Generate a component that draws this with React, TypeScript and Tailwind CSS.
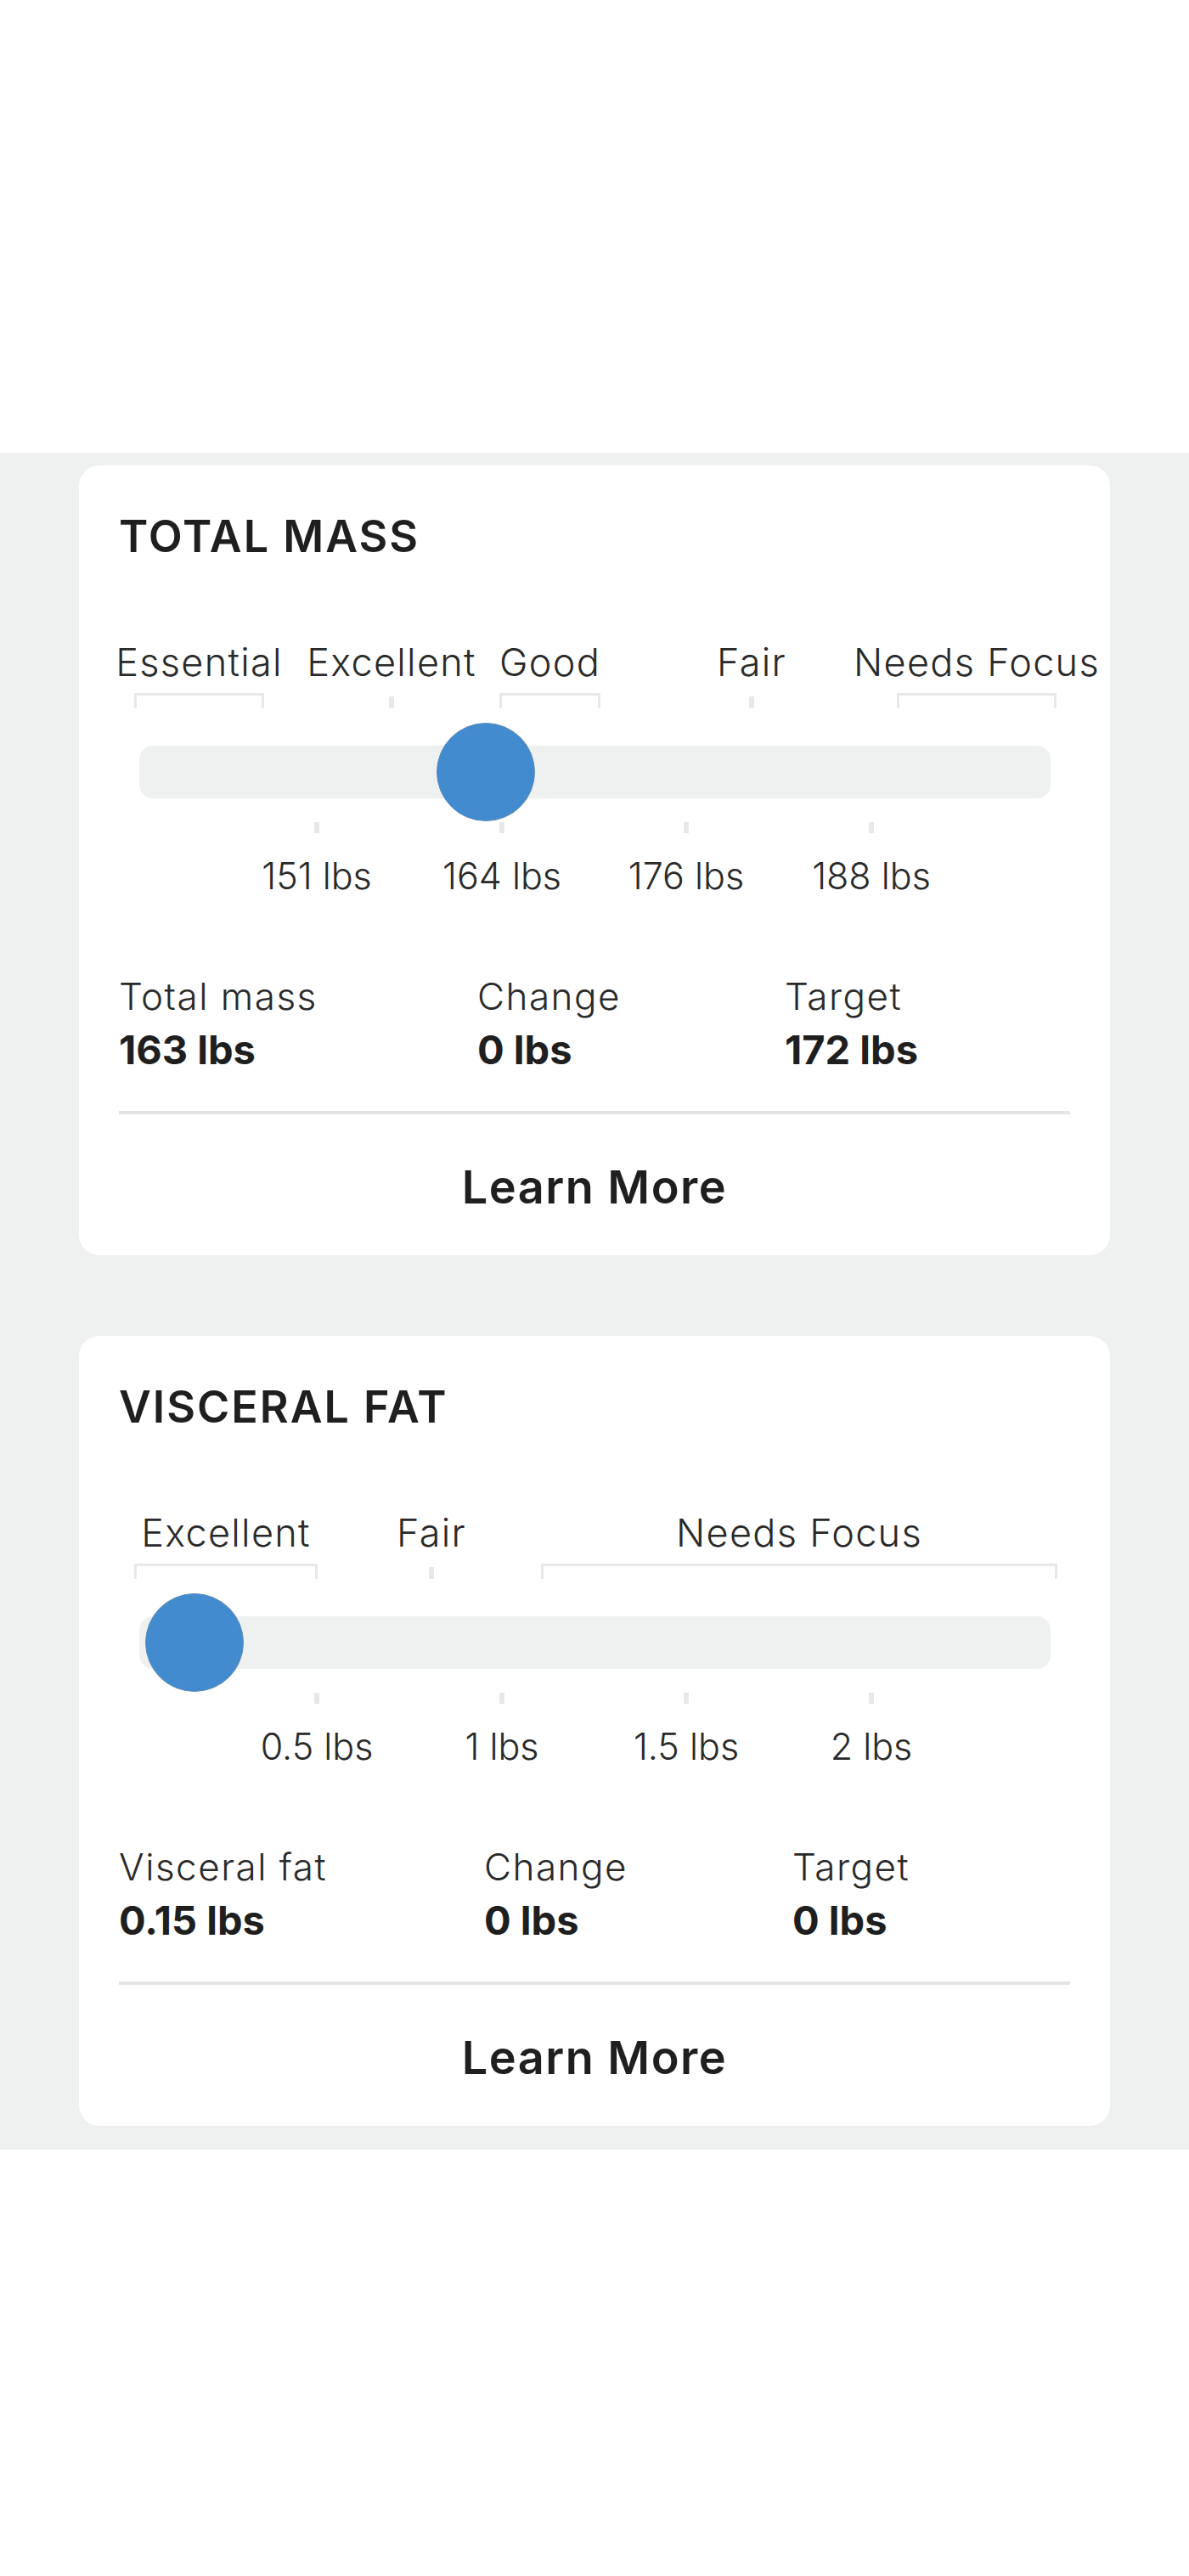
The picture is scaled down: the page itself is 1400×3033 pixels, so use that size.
import React from "react"

type Zone = { label: string; from: number; to?: number }
type Tick = { at: number; label: string }
type Stat = { label: string; value: string }

type Metric = {
  title: string
  zones: Zone[]
  ticks: Tick[]
  thumb: number
  stats: Stat[]
  cols: string
}

const metrics: Metric[] = [
  {
    title: "TOTAL MASS",
    zones: [
      { label: "Essential", from: 18, to: 171 },
      { label: "Excellent", from: 318 },
      { label: "Good", from: 448, to: 567 },
      { label: "Fair", from: 742 },
      { label: "Needs Focus", from: 916, to: 1104 },
    ],
    ticks: [
      { at: 230, label: "151 lbs" },
      { at: 448, label: "164 lbs" },
      { at: 665, label: "176 lbs" },
      { at: 883, label: "188 lbs" },
    ],
    thumb: 432,
    stats: [
      { label: "Total mass", value: "163 lbs" },
      { label: "Change", value: "0 lbs" },
      { label: "Target", value: "172 lbs" },
    ],
    cols: "grid-cols-[422px_362px_1fr]",
  },
  {
    title: "VISCERAL FAT",
    zones: [
      { label: "Excellent", from: 18, to: 234 },
      { label: "Fair", from: 365 },
      { label: "Needs Focus", from: 497, to: 1105 },
    ],
    ticks: [
      { at: 230, label: "0.5 lbs" },
      { at: 448, label: "1 lbs" },
      { at: 665, label: "1.5 lbs" },
      { at: 883, label: "2 lbs" },
    ],
    thumb: 89,
    stats: [
      { label: "Visceral fat", value: "0.15 lbs" },
      { label: "Change", value: "0 lbs" },
      { label: "Target", value: "0 lbs" },
    ],
    cols: "grid-cols-[430px_363px_1fr]",
  },
]

function centerOf(z: Zone) {
  return z.to !== undefined ? (z.from + z.to) / 2 : z.from + 3
}

// zone labels, brackets, track with thumb, value ticks
function Scale({ m }: { m: Metric }) {
  return (
    <div className="mt-[99px] flex flex-col">
      <div className="relative h-[45px]">
        {m.zones.map((z) => (
          <span
            key={z.label}
            className="absolute top-0 -translate-x-1/2 whitespace-nowrap text-[45px] leading-none font-light tracking-[1.3px] text-[#2a2a2a]"
            style={{ left: centerOf(z) }}
          >
            {z.label}
          </span>
        ))}
      </div>

      <div className="relative mt-[14px] h-[18px]">
        {m.zones.map((z) =>
          z.to !== undefined ? (
            <div
              key={z.label}
              className="absolute top-0 h-[18px] border-x-[3px] border-t-[3px] border-[#e7e9e8]"
              style={{ left: z.from, width: z.to - z.from }}
            />
          ) : (
            <div
              key={z.label}
              className="absolute bottom-0 h-[14px] w-[6px] bg-[#e7e9e8]"
              style={{ left: z.from }}
            />
          )
        )}
      </div>

      <div className="relative mt-[44px] ml-[24px] h-[62px] w-[1073px] rounded-[16px] bg-[#eff1f0]">
        <div
          className="absolute top-1/2 h-[116px] w-[116px] -translate-x-1/2 -translate-y-1/2 rounded-full border border-[#5f8db8] bg-[#428bcf]"
          style={{ left: m.thumb - 24 }}
        />
      </div>

      <div className="relative mt-[28px] h-[13px]">
        {m.ticks.map((t) => (
          <div
            key={t.label}
            className="absolute top-0 h-[13px] w-[6px] bg-[#e7e9e8]"
            style={{ left: t.at }}
          />
        ))}
      </div>

      <div className="relative mt-[29px] h-[43px]">
        {m.ticks.map((t) => (
          <span
            key={t.label}
            className="absolute top-0 -translate-x-1/2 whitespace-nowrap text-[43px] leading-none font-light text-[#2a2a2a]"
            style={{ left: t.at + 3 }}
          >
            {t.label}
          </span>
        ))}
      </div>
    </div>
  )
}

function MetricCard({ m }: { m: Metric }) {
  return (
    <div className="mx-[93px] flex flex-col rounded-[24px] bg-white px-[47px] pt-[58px] pb-[53px]">
      <h2 className="text-[52px] leading-none font-semibold tracking-[2px] text-[#1f1f1f]">
        {m.title}
      </h2>

      <Scale m={m} />

      <div className={`mt-[98px] grid ${m.cols}`}>
        {m.stats.map((s) => (
          <div key={s.label} className="flex flex-col gap-[17px]">
            <div className="text-[44px] leading-none font-light tracking-[1.5px] text-[#2a2a2a]">
              {s.label}
            </div>
            <div className="text-[47px] leading-none font-bold text-[#1f1f1f]">
              {s.value}
            </div>
          </div>
        ))}
      </div>

      <div className="mt-[49px] h-[4px] bg-[#e3e5e4]" />

      <div className="mt-[59px] text-center text-[54px] leading-none font-semibold tracking-[1.5px] text-[#1f1f1f]">
        Learn More
      </div>
    </div>
  )
}

export default function App() {
  return (
    <div className="min-h-[3033px] bg-white font-['Inter','Noto_Sans',sans-serif]">
      <div className="h-[533px]" />

      <div className="flex flex-col gap-[95px] bg-[#eff1f0] pt-[15px] pb-[28px]">
        {metrics.map((m) => (
          <MetricCard key={m.title} m={m} />
        ))}
      </div>
    </div>
  )
}
